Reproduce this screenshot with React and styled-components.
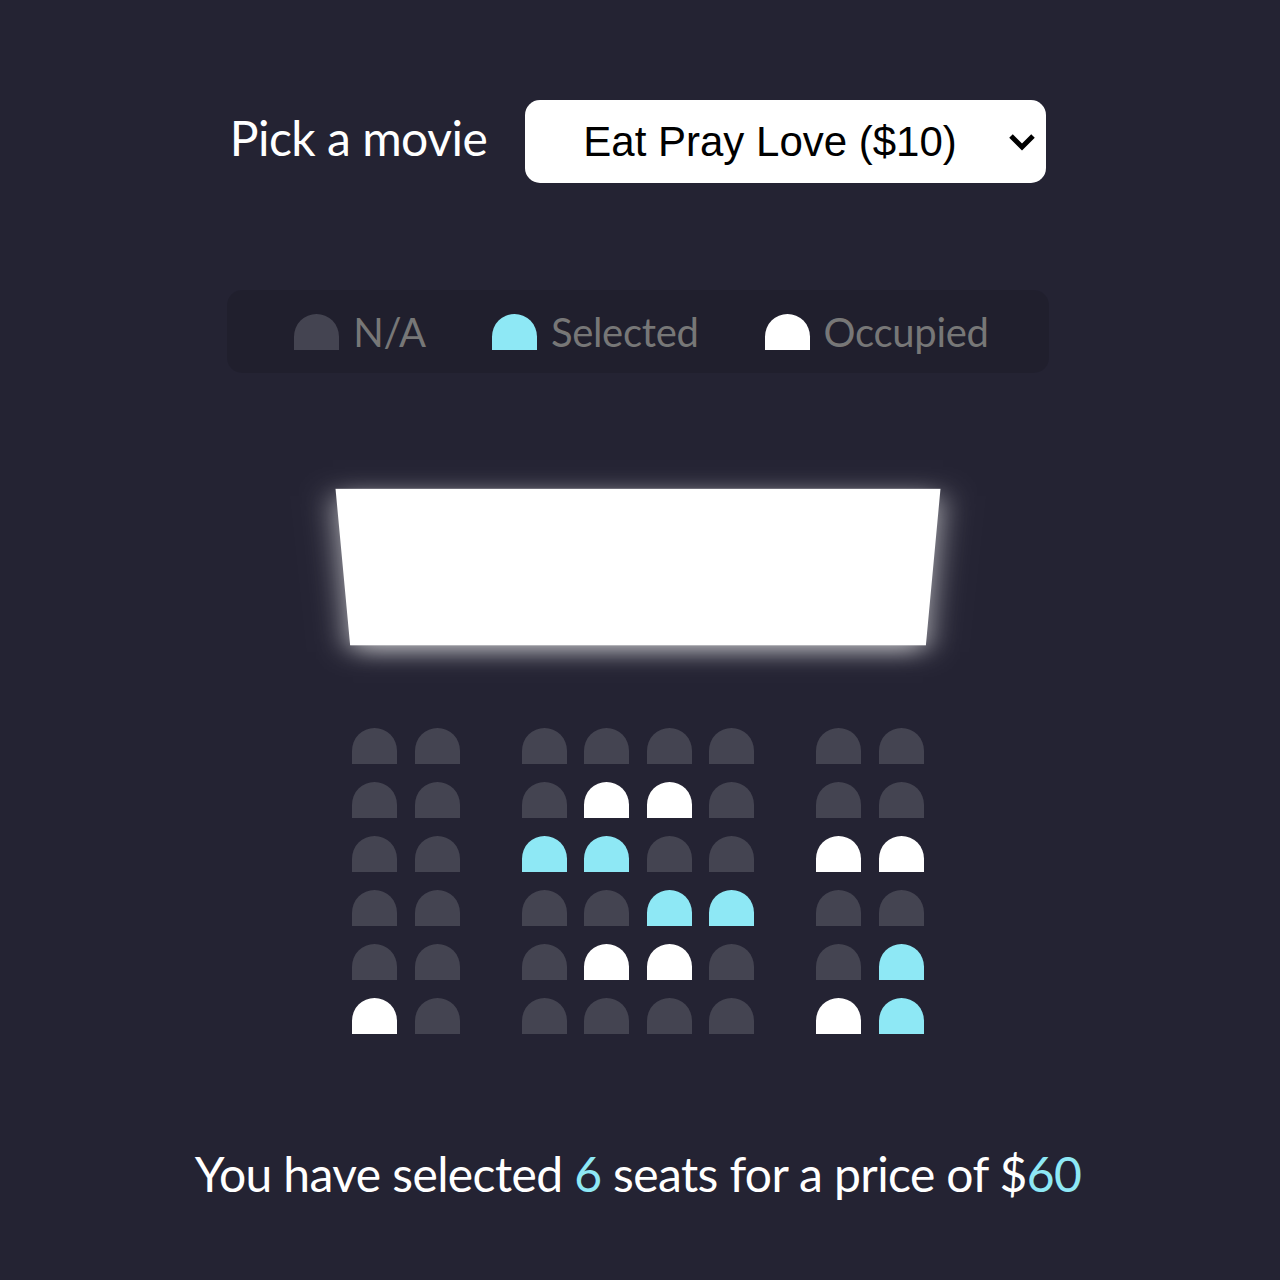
import React from "react";
import styled, { createGlobalStyle } from "styled-components";

const Global = createGlobalStyle`
  * { box-sizing: border-box; }
  html, body { margin: 0; padding: 0; background: #242333; }
  body { font-family: Lato, "Noto Sans", sans-serif; color: #fff; }
`;

const Page = styled.main`
  min-height: 1280px;
  display: flex;
  flex-direction: column;
  align-items: center;
  padding: 100px 4px 0 0;
`;

const Header = styled.div`
  display: flex;
  align-items: baseline;
  gap: 38px;
`;

const Label = styled.label`
  font-family: Lato, sans-serif;
  font-size: 48px;
  letter-spacing: -0.5px;
  color: #fff;
`;

const SelectWrap = styled.div`
  position: relative;
  display: inline-flex;
`;

const Select = styled.select`
  appearance: none;
  -webkit-appearance: none;
  width: 521px;
  height: 83px;
  padding: 0 60px 0 58px;
  border: 0;
  border-radius: 15px;
  background: #fff;
  color: #000;
  font-family: "Liberation Sans", Arial, sans-serif;
  font-size: 42px;
  outline: none;
`;

const Chevron = styled.svg`
  position: absolute;
  right: 10px;
  top: 50%;
  transform: translateY(-50%);
  pointer-events: none;
`;

const Legend = styled.ul`
  list-style: none;
  margin: 107px 0 0;
  height: 83px;
  padding: 0 60px 0 67px;
  display: flex;
  align-items: center;
  gap: 66px;
  background: rgba(0, 0, 0, 0.1);
  border-radius: 15px;
`;

const LegendItem = styled.li`
  display: flex;
  align-items: center;
  gap: 14px;
`;

const LegendText = styled.small`
  font-family: Lato, sans-serif;
  font-size: 40px;
  letter-spacing: -0.3px;
  color: #777;
`;

const seatColors = {
  na: "#444451",
  selected: "#8ee8f5",
  occupied: "#ffffff",
};

const Seat = styled.div`
  width: 45px;
  height: 36px;
  flex: none;
  background: ${(p) => seatColors[p.$status]};
  border-top-left-radius: 30px;
  border-top-right-radius: 30px;
`;

const Theater = styled.div`
  margin-top: 46px;
  width: 589.5px;
  perspective: 3000px;
  display: flex;
  flex-direction: column;
`;

const Screen = styled.div`
  height: 210px;
  width: 100%;
  margin: 45px 0;
  background: #fff;
  transform: rotateX(-45deg);
  box-shadow: 0 9px 30px rgba(255, 255, 255, 0.7);
`;

const Row = styled.div`
  display: flex;
  padding: 9px;
  gap: 62px;
`;

const Group = styled.div`
  display: flex;
  gap: 17.5px;
`;

const Summary = styled.p`
  margin: 102px 0 0;
  font-family: Lato, sans-serif;
  font-size: 48px;
  letter-spacing: -0.6px;
  color: #fff;
`;

const Accent = styled.span`
  color: #8ee8f5;
`;

const layout = [
  "nn nnnn nn",
  "nn noon nn",
  "nn ssnn oo",
  "nn nnss nn",
  "nn noon ns",
  "on nnnn os",
];
const code = { n: "na", s: "selected", o: "occupied" };

export default function App() {
  return (
    <>
      <Global />
      <Page>
        <Header>
          <Label htmlFor="movie">Pick a movie</Label>
          <SelectWrap>
            <Select id="movie" defaultValue="10">
              <option value="10">Eat Pray Love ($10)</option>
              <option value="12">Avengers: Endgame ($12)</option>
              <option value="8">Joker ($8)</option>
              <option value="9">Toy Story 4 ($9)</option>
            </Select>
            <Chevron width="28" height="18" viewBox="0 0 28 18">
              <polyline
                points="3,3 14,14 25,3"
                fill="none"
                stroke="#000"
                strokeWidth="5"
                strokeLinejoin="miter"
              />
            </Chevron>
          </SelectWrap>
        </Header>

        <Legend>
          <LegendItem>
            <Seat $status="na" />
            <LegendText>N/A</LegendText>
          </LegendItem>
          <LegendItem>
            <Seat $status="selected" />
            <LegendText>Selected</LegendText>
          </LegendItem>
          <LegendItem>
            <Seat $status="occupied" />
            <LegendText>Occupied</LegendText>
          </LegendItem>
        </Legend>

        <Theater>
          <Screen />
          {layout.map((r, i) => (
            <Row key={i}>
              {r.split(" ").map((g, j) => (
                <Group key={j}>
                  {g.split("").map((c, k) => (
                    <Seat key={k} $status={code[c]} />
                  ))}
                </Group>
              ))}
            </Row>
          ))}
        </Theater>

        <Summary>
          You have selected <Accent>6</Accent> seats for a price of $<Accent>60</Accent>
        </Summary>
      </Page>
    </>
  );
}
